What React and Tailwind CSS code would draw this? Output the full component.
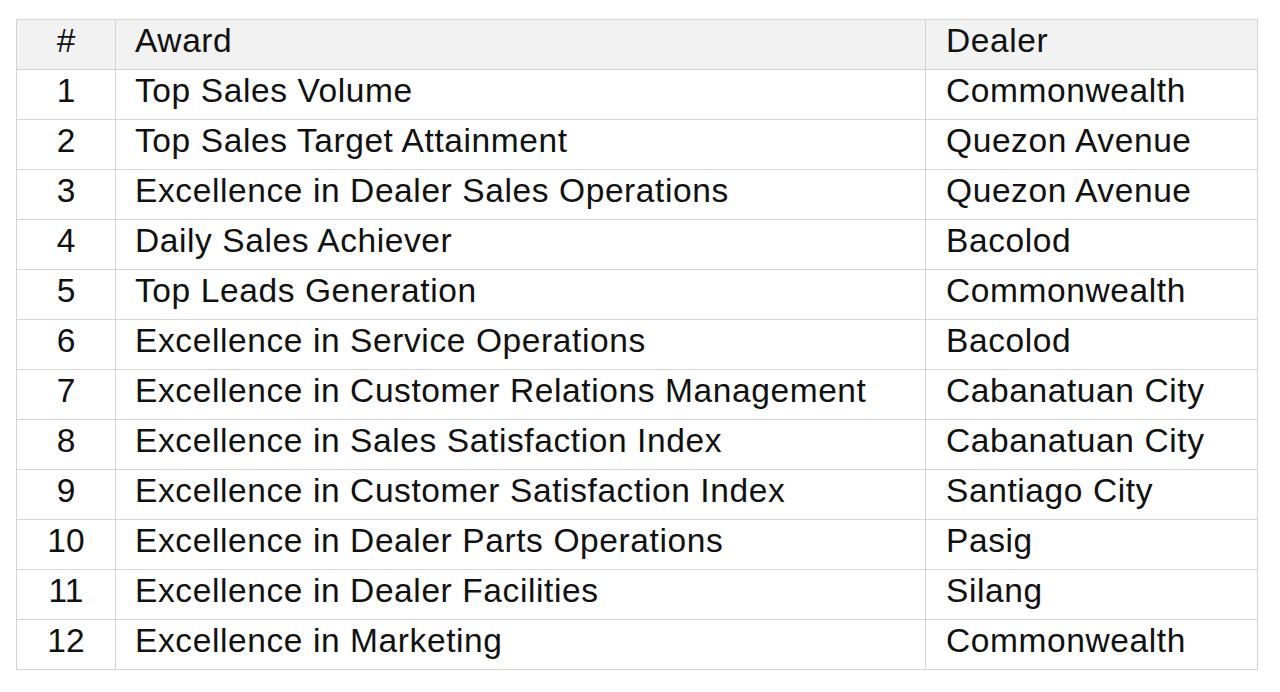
const rows = [
  ["1", "Top Sales Volume", "Commonwealth"],
  ["2", "Top Sales Target Attainment", "Quezon Avenue"],
  ["3", "Excellence in Dealer Sales Operations", "Quezon Avenue"],
  ["4", "Daily Sales Achiever", "Bacolod"],
  ["5", "Top Leads Generation", "Commonwealth"],
  ["6", "Excellence in Service Operations", "Bacolod"],
  ["7", "Excellence in Customer Relations Management", "Cabanatuan City"],
  ["8", "Excellence in Sales Satisfaction Index", "Cabanatuan City"],
  ["9", "Excellence in Customer Satisfaction Index", "Santiago City"],
  ["10", "Excellence in Dealer Parts Operations", "Pasig"],
  ["11", "Excellence in Dealer Facilities", "Silang"],
  ["12", "Excellence in Marketing", "Commonwealth"],
];

function Row({ cells, header }) {
  return (
    <div
      className={
        "grid grid-cols-[99px_810px_332px] h-[50px] border-b border-[#d3d3d3] " +
        (header ? "bg-[#f2f2f2]" : "bg-white")
      }
    >
      <div className="border-r border-[#d3d3d3] flex items-start justify-center leading-[41px]">
        {cells[0]}
      </div>
      <div className="border-r border-[#d3d3d3] pl-[19px] leading-[41px] whitespace-nowrap tracking-[0.6px]">
        {cells[1]}
      </div>
      <div className="border-r border-[#d3d3d3] pl-[20px] leading-[41px] whitespace-nowrap tracking-[0.6px]">
        {cells[2]}
      </div>
    </div>
  );
}

export default function App() {
  return (
    <div className="w-[1280px] h-[692px] bg-white pt-[19px] pl-[16px] text-[#111111] text-[33.5px] [font-family:'Liberation_Sans',Arial,sans-serif]">
      <div className="w-[1242px] border-l border-t border-[#d3d3d3]">
        <Row cells={["#", "Award", "Dealer"]} header />
        {rows.map((r) => (
          <Row key={r[0]} cells={r} />
        ))}
      </div>
    </div>
  );
}
